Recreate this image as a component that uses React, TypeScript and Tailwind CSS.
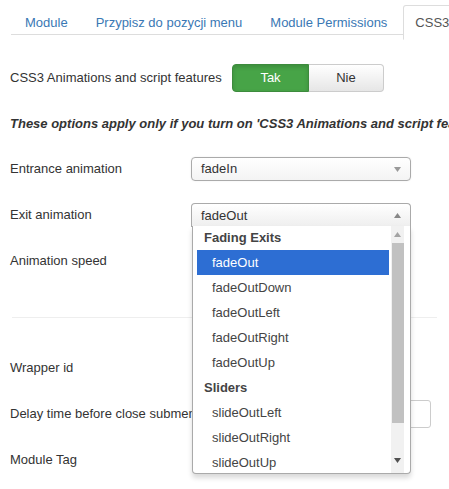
import React from "react";

const Up = ({ c = "#777" }: { c?: string }) => (
  <svg width="7" height="5" viewBox="0 0 7 5"><path d="M0 5 L3.5 0 L7 5 Z" fill={c} /></svg>
);
const Down = ({ c = "#777" }: { c?: string }) => (
  <svg width="7" height="5" viewBox="0 0 7 5"><path d="M0 0 L7 0 L3.5 5 Z" fill={c} /></svg>
);

function Row({ label, children, h = "h-[46px]" }: { label: string; children?: React.ReactNode; h?: string }) {
  return (
    <div className={`flex items-center ${h}`}>
      <div className="w-[191px] shrink-0 pl-[10px] whitespace-nowrap">{label}</div>
      <div className="relative">{children}</div>
    </div>
  );
}

export default function App() {
  const items: { t: string; h?: boolean; sel?: boolean }[] = [
    { t: "Fading Exits", h: true },
    { t: "fadeOut", sel: true },
    { t: "fadeOutDown" },
    { t: "fadeOutLeft" },
    { t: "fadeOutRight" },
    { t: "fadeOutUp" },
    { t: "Sliders", h: true },
    { t: "slideOutLeft" },
    { t: "slideOutRight" },
    { t: "slideOutUp" },
  ];
  return (
    <div
      className="w-[449px] h-[489px] bg-white overflow-hidden relative text-[13px] text-[#333]"
      style={{ fontFamily: '"Liberation Sans", Arial, sans-serif' }}
    >
      {/* Tabs */}
      <div className="pt-[5px] ml-[11px] flex border-b border-[#ddd] h-[35px] whitespace-nowrap">
        {["Module", "Przypisz do pozycji menu", "Module Permissions"].map((t) => (
          <div key={t} className="px-[13px] border border-transparent h-[35px] flex items-center text-[#3a78b4] -mb-px">
            {t}
          </div>
        ))}
        <div className="ml-[2px] px-[11px] border border-[#ddd] border-b-white bg-white h-[35px] flex items-center text-[#555] -mb-px rounded-t-[3px]">
          CSS3 Animations
        </div>
      </div>

      {/* Toggle */}
      <div className="flex items-center mt-[29px] h-[28px]">
        <div className="pl-[10px] w-[232px] shrink-0">CSS3 Animations and script features</div>
        <div className="flex h-[28px]">
          <div className="w-[77px] flex items-center justify-center text-white bg-[#47a447] border border-[#3d8b3d] rounded-l-[4px] shadow-[inset_0_2px_4px_rgba(0,0,0,0.15)]">
            Tak
          </div>
          <div className="w-[75px] flex items-center justify-center bg-gradient-to-b from-white to-[#e6e6e6] border border-[#ccc] border-l-0 rounded-r-[4px]">
            Nie
          </div>
        </div>
      </div>

      <div className="mt-[22px] pl-[10px] italic font-bold whitespace-nowrap h-[20px] leading-[20px]">
        These options apply only if you turn on 'CSS3 Animations and script features'
      </div>

      <div className="mt-[12px]">
        <Row label="Entrance animation">
          <div className="w-[220px] h-[24px] border border-[#aaa] rounded-[4px] bg-gradient-to-b from-white to-[#f4f4f4] flex items-center justify-between pl-[9px] pr-[9px] shadow-[0_0_2px_rgba(0,0,0,0.08)]">
            <span>fadeIn</span>
            <Down c="#999" />
          </div>
        </Row>
        <Row label="Exit animation">
          <div className="relative z-10">
            <div className="w-[220px] h-[24px] border border-[#aaa] border-b-0 rounded-t-[4px] bg-gradient-to-b from-white to-[#eee] flex items-center justify-between pl-[9px] pr-[9px]">
              <span>fadeOut</span>
              <Up c="#888" />
            </div>
            <div className="absolute left-[1px] top-[23px] w-[219px] h-[248px] bg-white border border-[#aaa] border-t-0 rounded-b-[4px] shadow-[0_4px_5px_rgba(0,0,0,0.15)] flex overflow-hidden">
              <div className="flex-1 pl-[4px] pr-[2px] -mt-px">
                {items.map((it) =>
                  it.h ? (
                    <div key={it.t} className="h-[25px] flex items-center pl-[7px] font-bold text-[#444]">
                      {it.t}
                    </div>
                  ) : (
                    <div
                      key={it.t}
                      className={`h-[25px] flex items-center pl-[15px] ${it.sel ? "bg-[#2d6ed3] text-white" : "text-[#444]"}`}
                    >
                      {it.t}
                    </div>
                  )
                )}
              </div>
              <div className="w-[13px] mr-[6px] bg-[#f1f1f1] flex flex-col items-center">
                <div className="h-[17px] flex items-center justify-center"><Up c="#a3a3a3" /></div>
                <div className="w-[12px] h-[180px] bg-[#c1c1c1]" />
                <div className="flex-1" />
                <div className="h-[26px] flex items-center justify-center"><Down c="#505050" /></div>
              </div>
            </div>
          </div>
        </Row>
        <Row label="Animation speed" />
      </div>

      <div className="mt-[33px] mx-[12px] border-t border-[#eee]" />

      <div className="mt-[27px]">
        <Row label="Wrapper id">
          <div className="ml-[3px] w-[215px] h-[28px] border border-[#ccc] rounded-[3px]" />
        </Row>
        <Row label="Delay time before close submenu">
          <div className="ml-[3px] w-[237px] h-[28px] border border-[#ccc] rounded-[3px]" />
        </Row>
        <Row label="Module Tag">
          <div className="ml-[3px] w-[215px] h-[22px] border border-[#aaa] rounded-[4px]" />
        </Row>
      </div>
    </div>
  );
}
